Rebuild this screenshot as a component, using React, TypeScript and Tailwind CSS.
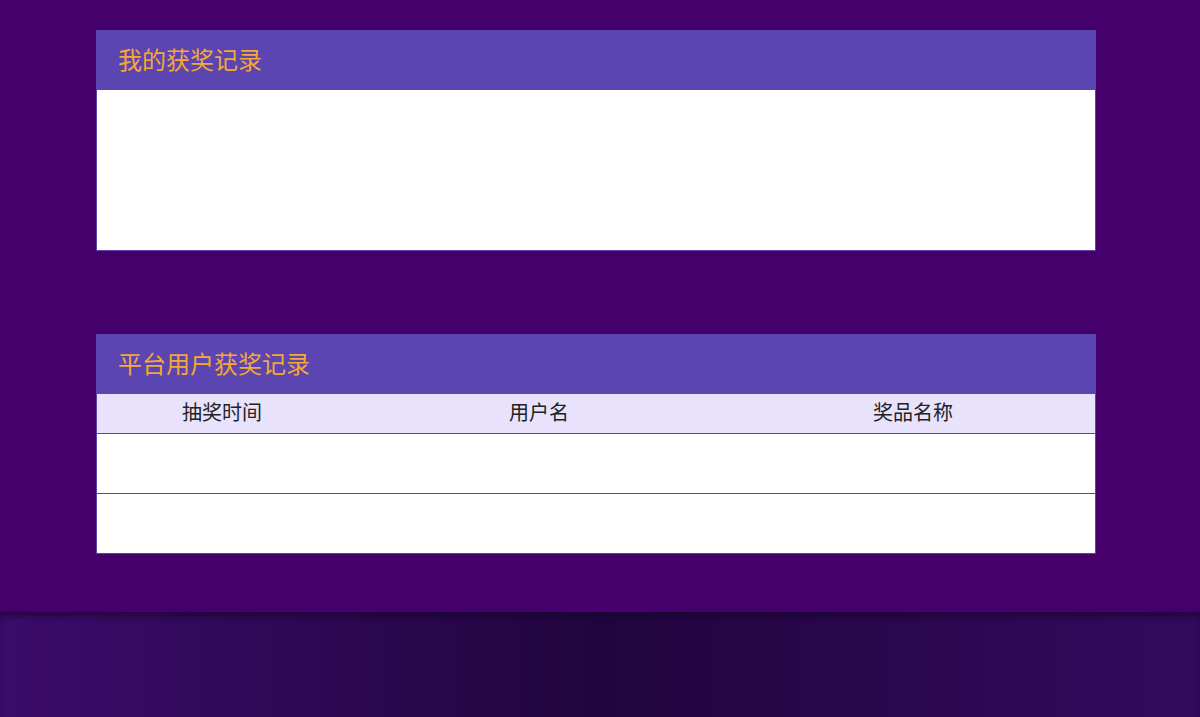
import React from "react";

const font = { fontFamily: '"Noto Sans CJK SC", "Noto Sans", sans-serif' };

const Panel: React.FC<{ title: string; children: React.ReactNode }> = ({ title, children }) => (
  <section className="w-[1000px] border border-[#5b44ae] bg-white">
    <div className="h-[59px] bg-[#5b45b0] flex items-center pl-[21px] pb-[3px]">
      <h2 className="text-[24px] leading-none text-[#f5a833]">{title}</h2>
    </div>
    {children}
  </section>
);

const App: React.FC = () => {
  return (
    <main style={font} className="w-[1200px] h-[717px] bg-[#45006b] flex flex-col overflow-hidden">
      <div className="flex flex-col pl-[96px] pt-[30px] h-[612px]">
        <Panel title="我的获奖记录">
          <div className="h-[160px] bg-white" />
        </Panel>

        <div className="h-[83px] shrink-0" />

        <Panel title="平台用户获奖记录">
          <div className="grid grid-cols-[250px_384px_1fr] h-[40px] pb-[3px] bg-[#e8e2fc] border-b border-[#5b44ae] items-center text-[20px] text-[#222]">
            <span className="text-center">抽奖时间</span>
            <span className="text-center">用户名</span>
            <span className="text-center">奖品名称</span>
          </div>
          <div className="h-[60px] border-b border-[#5b44ae] bg-white" />
          <div className="h-[59px] bg-white" />
        </Panel>
      </div>

      <footer className="flex-1 bg-gradient-to-r from-[#3b0c6a] via-[#22053f] to-[#340a5e] shadow-[inset_0_6px_6px_-2px_rgba(20,0,40,0.6)]" />
    </main>
  );
};

export default App;
